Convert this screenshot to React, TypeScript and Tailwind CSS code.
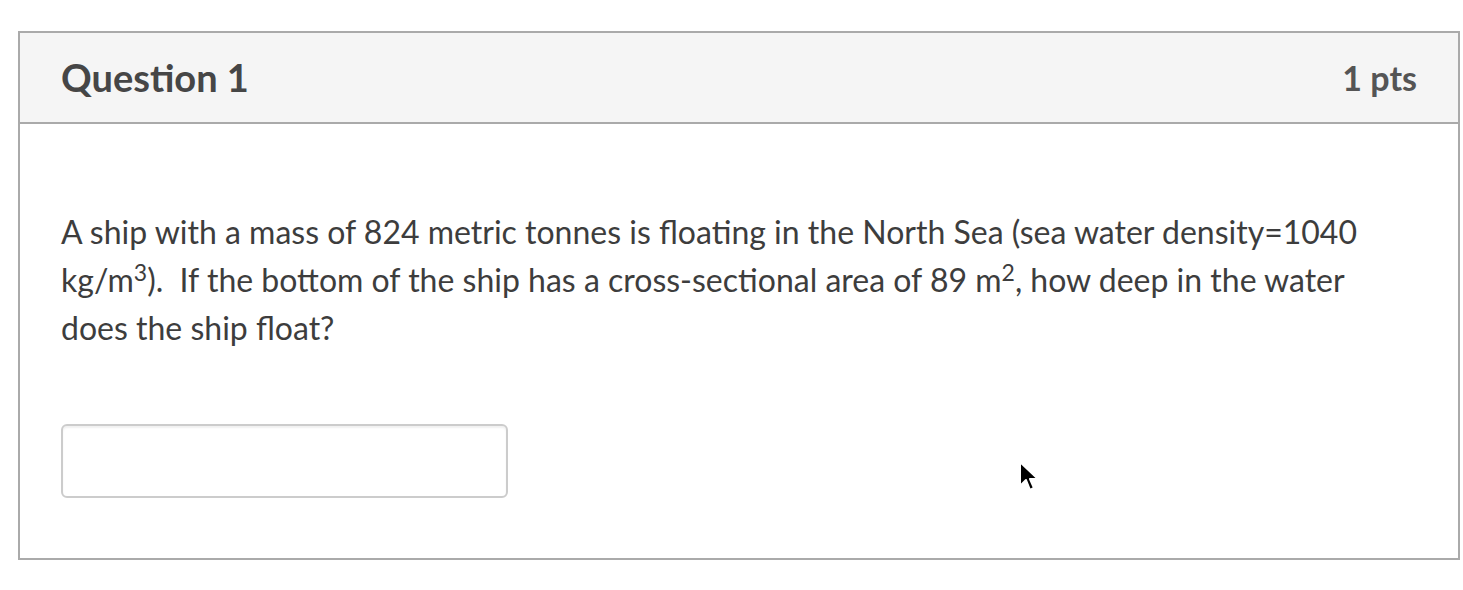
export default function App() {
  return (
    <div className="relative min-h-[590px] w-full bg-white pt-[31px] pl-[18px] pr-[3px]" style={{ fontFamily: "Lato, 'Open Sans', sans-serif" }}>
      <div className="border-2 border-[#aaaaaa] text-[#3d3d3d]">
        <div className="flex h-[91px] items-center justify-between border-b-2 border-[#aaaaaa] bg-[#f5f5f5] pl-[41px] pr-[41px]">
          <h2 className="text-[38px] font-bold text-[#464646]">Question 1</h2>
          <span className="text-[34px] font-bold text-[#555555]">1 pts</span>
        </div>
        <div className="px-[41px] pt-[84px] pb-[60px]">
          <p className="text-[32px] leading-[48px]">
            A ship with a mass of 824 metric tonnes is floating in the North Sea (sea water density=1040 kg/m
            <sup className="text-[23px] leading-none">3</sup>).&nbsp; If the bottom of the ship has a cross-sectional area of 89 m
            <sup className="text-[23px] leading-none">2</sup>, how deep in the water does the ship float?
          </p>
          <input
            type="text"
            className="mt-[72px] block h-[74px] w-[447px] rounded-[6px] border-2 border-[#cccccc] bg-white shadow-[inset_0_2px_2px_rgba(0,0,0,0.06)] outline-none"
          />
        </div>
      </div>
      <svg className="absolute left-[1018px] top-[460px]" width="26" height="34" viewBox="0 0 26 34">
        <path d="M2 2 L2 26 L8 20 L12 30 L16 28 L12 19 L20 19 Z" fill="#000" stroke="#fff" strokeWidth="2" strokeLinejoin="round" />
      </svg>
    </div>
  );
}
